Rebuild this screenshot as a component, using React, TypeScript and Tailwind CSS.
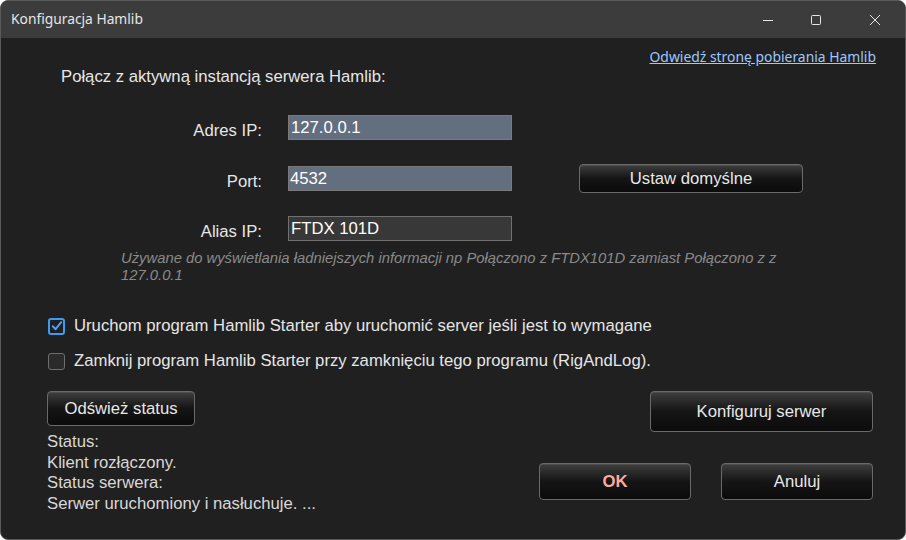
import React from "react";

const btn =
  "rounded-[4px] border border-[#6a6a6a] bg-gradient-to-b from-[#3f3f3f] via-[#151515] to-[#0b0b0b] text-[16.7px] text-[#e8e8e8] flex items-center justify-center shadow-[inset_0_1px_0_rgba(255,255,255,0.08)]";

function Checkbox({ checked }: { checked?: boolean }) {
  return checked ? (
    <div className="w-[17px] h-[17px] rounded-[3px] border-2 border-[#3f9bef] bg-[#1f1f1f] flex items-center justify-center">
      <svg width="12" height="12" viewBox="0 0 12 12">
        <path d="M1.8 6.3 L4.6 9.2 L10.2 2.2" fill="none" stroke="#4aa3f2" strokeWidth="2" strokeLinecap="round" strokeLinejoin="round" />
      </svg>
    </div>
  ) : (
    <div className="w-[17px] h-[17px] rounded-[3px] border border-[#6e6e6e] bg-[#2b2b2b]" />
  );
}

export default function App() {
  return (
    <div className="w-[906px] h-[540px] bg-[#202020] rounded-[8px] border border-[#5a5a5a] overflow-hidden flex flex-col text-[#e6e6e6] font-['Liberation_Sans',Arial,sans-serif]">
      <div className="h-[37px] shrink-0 bg-[#3c3c3c] flex items-center justify-between">
        <div className="pl-[10px] text-[13.8px] text-[#e6e6e6] font-['Noto_Sans','Open_Sans',sans-serif]">Konfiguracja Hamlib</div>
        <div className="flex items-center h-full pr-[7px]">
          <div className="w-[46px] h-full flex items-center justify-center">
            <svg width="12" height="12" viewBox="0 0 12 12"><path d="M1 6.5 H11" stroke="#e6e6e6" strokeWidth="1" /></svg>
          </div>
          <div className="w-[46px] h-full flex items-center justify-center ml-[2px]">
            <svg width="12" height="12" viewBox="0 0 12 12"><rect x="1.5" y="1.5" width="9" height="9" rx="1" fill="none" stroke="#e6e6e6" strokeWidth="1" /></svg>
          </div>
          <div className="w-[46px] h-full flex items-center justify-center ml-[13px]">
            <svg width="12" height="12" viewBox="0 0 12 12"><path d="M1 1 L11 11 M11 1 L1 11" stroke="#e6e6e6" strokeWidth="1" /></svg>
          </div>
        </div>
      </div>

      <div className="flex-1 flex flex-col">
        <div className="mt-[10px] flex justify-end pr-[29px]">
          <span className="text-[13.9px] leading-[18px] text-[#9cc8ff] underline font-['Noto_Sans','Open_Sans',sans-serif]">
            Odwiedź stronę pobierania Hamlib
          </span>
        </div>

        <div className="mt-[1px] pl-[60px] text-[16.7px] leading-[20px]">Połącz z aktywną instancją serwera Hamlib:</div>

        <div className="mt-[28px] flex items-center h-[25px]">
          <div className="w-[261px] text-right text-[16.7px] pt-[6px]">Adres IP:</div>
          <div className="ml-[26px] w-[224px] h-[25px] bg-[#636e7e] border border-[#7a7a7a] flex items-center pl-[2px] text-[16.7px] text-white">127.0.0.1</div>
        </div>

        <div className="mt-[24px] flex items-center h-[29px]">
          <div className="w-[261px] text-right text-[16.7px] pt-[6px]">Port:</div>
          <div className="ml-[26px] w-[224px] h-[25px] bg-[#636e7e] border border-[#7a7a7a] flex items-center pl-[1px] text-[16.7px] text-white">4532</div>
          <div className={`ml-[67px] w-[224px] h-[29px] ${btn}`}>Ustaw domyślne</div>
        </div>

        <div className="mt-[23px] flex items-center h-[25px]">
          <div className="w-[261px] text-right text-[16.7px] pt-[6px]">Alias IP:</div>
          <div className="ml-[26px] w-[224px] h-[25px] bg-[#383838] border border-[#707070] flex items-center pl-[2px] text-[16.7px] text-white">FTDX 101D</div>
        </div>

        <div className="mt-[9px] pl-[120px] text-[14.8px] leading-[17px] italic text-[#8a8a8a]">
          Używane do wyświetlania ładniejszych informacji np Połączono z FTDX101D zamiast Połączono z z
          <br />
          127.0.0.1
        </div>

        <div className="mt-[32px] pl-[47px] flex items-center gap-[9px] h-[20px] text-[16.7px]">
          <Checkbox checked />
          <span>Uruchom program Hamlib Starter aby uruchomić server jeśli jest to wymagane</span>
        </div>
        <div className="mt-[15px] pl-[47px] flex items-center gap-[9px] h-[20px] text-[16.7px]">
          <Checkbox />
          <span>Zamknij program Hamlib Starter przy zamknięciu tego programu (RigAndLog).</span>
        </div>

        <div className="mt-[20px] flex justify-between pl-[46px] pr-[32px]">
          <div className="flex flex-col">
            <div className={`w-[148px] h-[35px] ${btn}`}>Odśwież status</div>
            <div className="mt-[6px] text-[16.7px] leading-[20.5px] text-[#d8d8d8]">
              <div>Status:</div>
              <div>Klient rozłączony.</div>
              <div>Status serwera:</div>
              <div>Serwer uruchomiony i nasłuchuje. ...</div>
            </div>
          </div>
          <div className="flex flex-col items-end">
            <div className={`w-[223px] h-[41px] ${btn}`}>Konfiguruj serwer</div>
            <div className="mt-[31px] flex gap-[30px]">
              <div className={`w-[152px] h-[37px] ${btn} font-bold !text-[#ffaa99]`}>OK</div>
              <div className={`w-[152px] h-[37px] ${btn}`}>Anuluj</div>
            </div>
          </div>
        </div>
      </div>
    </div>
  );
}
